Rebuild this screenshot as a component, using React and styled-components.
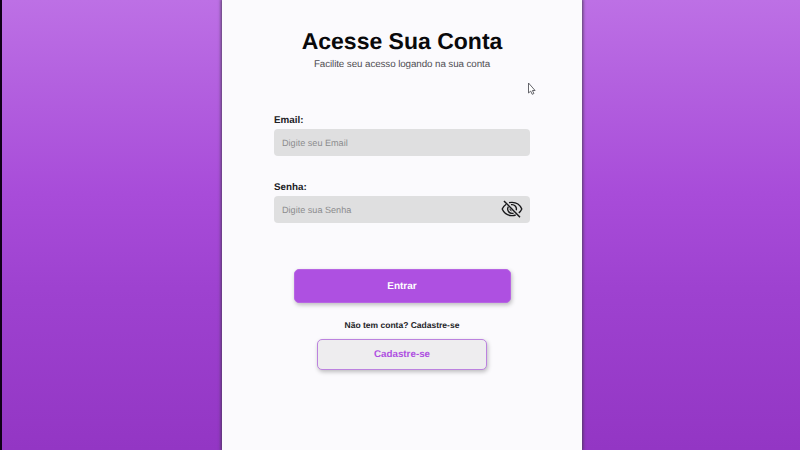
import React from "react";
import styled, { createGlobalStyle } from "styled-components";

const GlobalStyle = createGlobalStyle`
  *, *::before, *::after { box-sizing: border-box; }
  body {
    margin: 0;
    overflow: hidden;
    font-family: "Liberation Sans", Arial, sans-serif;
    text-rendering: geometricPrecision;
  }
`;

const Page = styled.div`
  display: flex;
  justify-content: center;
  height: 100vh;
  padding-left: 2px;
  border-left: 2px solid #100018;
  background: linear-gradient(180deg, #bd70e5 0%, #b360df 19%, #a84cd9 43%, #9e42d0 64%, #9336c4 100%);
`;

const Card = styled.main`
  display: flex;
  flex-direction: column;
  align-items: center;
  width: 360px;
  height: 100%;
  padding-top: 26px;
  background: #fbfafd;
  box-shadow: 0 0 3px 1px rgba(65, 55, 75, 0.85);
`;

const Title = styled.h1`
  margin: 0;
  color: #09090b;
  font-size: 23px;
  line-height: 30px;
  font-weight: 700;
  white-space: nowrap;
`;

const Subtitle = styled.p`
  margin: 2px 0 0;
  color: #4e4d52;
  font-size: 9.8px;
  line-height: 14px;
  letter-spacing: -0.09px;
  white-space: nowrap;
`;

const Form = styled.form`
  display: flex;
  flex-direction: column;
  gap: 24px;
  width: 256px;
  margin-top: 41px;
`;

const Field = styled.div`
  display: flex;
  flex-direction: column;
`;

const Label = styled.label`
  height: 16px;
  color: #202024;
  font-size: 9.8px;
  line-height: 15px;
  font-weight: 700;
`;

const InputBox = styled.div`
  display: flex;
  align-items: center;
  height: 27px;
  padding: 0 7px 0 8px;
  border-radius: 4px;
  background: #dfdfe0;
`;

const Input = styled.input`
  flex: 1;
  min-width: 0;
  padding: 0;
  border: 0;
  outline: 0;
  background: transparent;
  font: 9.1px "Liberation Sans", Arial, sans-serif;
  text-rendering: inherit;
  &::placeholder { color: #8c8c8e; opacity: 1; }
`;

const EyeIcon = styled.svg`
  width: 22px;
  height: 18px;
  margin-top: -1px;
  fill: none;
  stroke: #18181a;
  stroke-width: 1.35;
`;

const Button = styled.button`
  flex: none;
  width: ${(p) => (p.$outlined ? 170 : 217)}px;
  height: ${(p) => (p.$outlined ? 31 : 34)}px;
  margin-top: ${(p) => (p.$outlined ? 7 : 46)}px;
  padding: 1px 0 0;
  border: 1px solid ${(p) => (p.$outlined ? "#bc82df" : "#b765e3")};
  border-radius: 5px;
  background: ${(p) => (p.$outlined ? "#eeedef" : "#ae50e1")};
  color: ${(p) => (p.$outlined ? "#ae50e1" : "#ffffff")};
  box-shadow: 1px 2px 4px rgba(0, 0, 0, 0.25);
  font: 700 ${(p) => (p.$outlined ? 9.8 : 10)}px/14px "Liberation Sans", Arial, sans-serif;
  text-rendering: inherit;
`;

const Hint = styled.p`
  margin: 16px 0 0;
  color: #242428;
  font-size: 8.5px;
  line-height: 13px;
  font-weight: 700;
  white-space: nowrap;
`;

const Cursor = styled.svg`
  position: absolute;
  left: 527px;
  top: 82px;
  width: 9px;
  height: 14px;
`;

export default function App() {
  return (
    <Page>
      <GlobalStyle />
      <Card>
        <Title>Acesse Sua Conta</Title>
        <Subtitle>Facilite seu acesso logando na sua conta</Subtitle>
        <Form>
          <Field>
            <Label htmlFor="email">Email:</Label>
            <InputBox>
              <Input id="email" placeholder="Digite seu Email" />
            </InputBox>
          </Field>
          <Field>
            <Label htmlFor="senha">Senha:</Label>
            <InputBox>
              <Input id="senha" type="password" placeholder="Digite sua Senha" />
              <EyeIcon viewBox="0 0 22 18">
                <path d="M5.2 4.3C3.4 5.5 2 7.2 1.2 9c1.6 3.7 5.1 6.6 9.8 6.6 1.3 0 2.6-.2 3.7-.6" />
                <path d="M8 2.7c1-.2 2-.3 3-.3 4.7 0 8.2 2.9 9.8 6.6-.6 1.5-1.7 2.9-3 3.9" />
                <path d="M7.4 6.6A4.4 4.4 0 0 0 12.6 13.1M10 4.7A4.4 4.4 0 0 1 15.2 10.3" />
                <path d="M9 8.6a2 2 0 0 0 1.6 2.3" strokeWidth="1" />
                <path d="M3 .9 19 17.3" strokeWidth="1.5" />
              </EyeIcon>
            </InputBox>
          </Field>
        </Form>
        <Button>Entrar</Button>
        <Hint>Não tem conta? Cadastre-se</Hint>
        <Button $outlined>Cadastre-se</Button>
      </Card>
      <Cursor viewBox="0 0 9 14">
        <path d="M1.5 1v10l2.2-1.9 1.5 3.2 1.7-.8-1.5-3h2.7Z" fill="#fff" stroke="#55555b" strokeWidth=".9" />
      </Cursor>
    </Page>
  );
}
